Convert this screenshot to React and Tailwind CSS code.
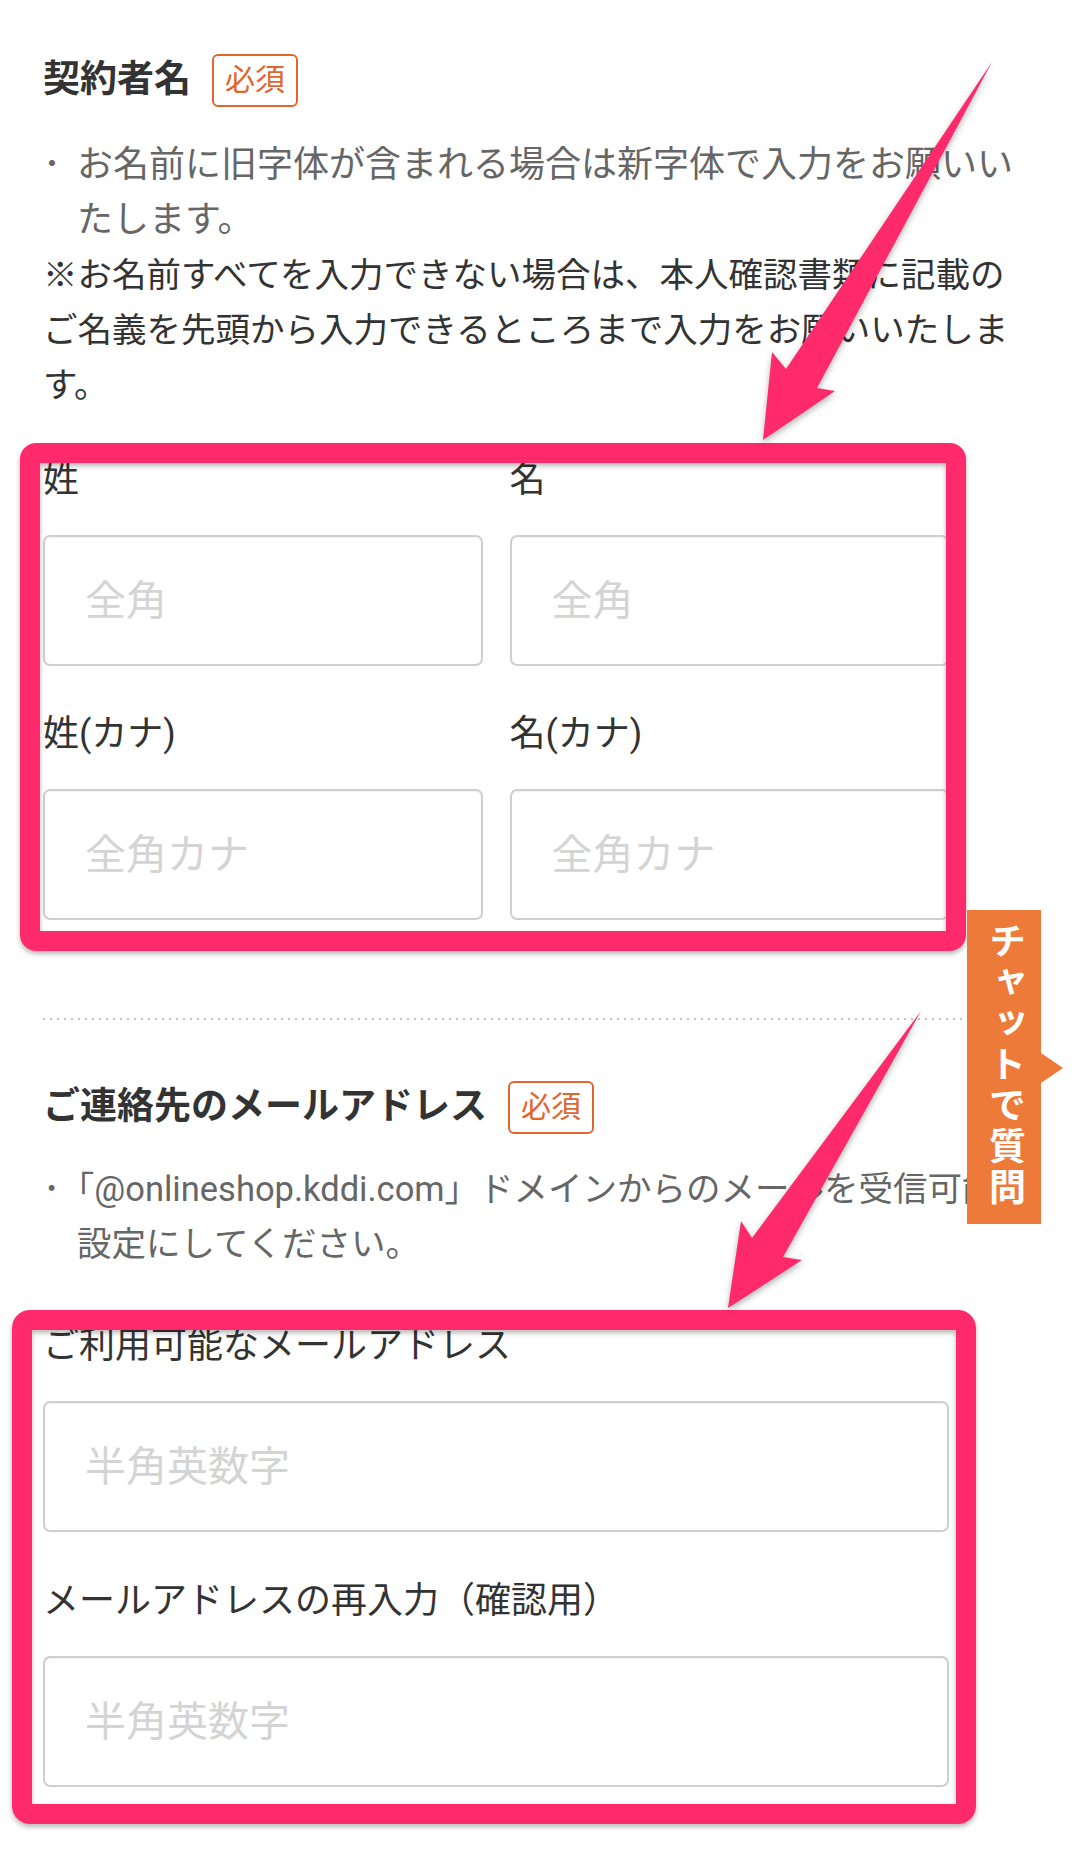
import React from 'react'

const FONT = "font-['Roboto','Noto_Sans_CJK_JP',sans-serif]"

function Heading({ title }) {
  return (
    <div className="flex items-center gap-[21px] h-[56px]">
      <h2 className="text-[37px] font-bold leading-[56px] text-[#333]">{title}</h2>
      <span className="flex items-center h-[53px] px-[11px] border-2 border-[#e2652f] rounded-[6px] text-[30px] leading-none text-[#e2652f]">
        必須
      </span>
    </div>
  )
}

function Field({ label, placeholder }) {
  return (
    <div className="flex flex-col">
      <label className="h-[56px] text-[36px] leading-[56px] text-[#333] whitespace-nowrap">{label}</label>
      <input
        type="text"
        placeholder={placeholder}
        className="mt-[27px] h-[131px] w-full px-[40px] bg-white border-2 border-[#cfcfcf] rounded-[7px] text-[41px] text-[#333] placeholder:text-[#d4d4d4] shadow-[inset_0_1px_2px_rgba(0,0,0,0.06)] outline-none"
      />
    </div>
  )
}

// pink annotation frame drawn over a block of the form
function Marked({ className, frame, children }) {
  return (
    <div className={'relative w-[906px] ' + className}>
      {children}
      <div
        className={
          'absolute border-[20px] border-[#fe2a6c] pointer-events-none shadow-[0_3px_5px_rgba(0,0,0,0.28),inset_0_3px_5px_rgba(0,0,0,0.28)] ' +
          frame
        }
      />
    </div>
  )
}

function Bullet({ children }) {
  return (
    <li className="flex">
      <span className="w-[34px] shrink-0">･</span>
      <span className="whitespace-nowrap">{children}</span>
    </li>
  )
}

export default function App() {
  return (
    <div className={'relative w-[1080px] h-[1863px] overflow-hidden bg-white ' + FONT}>
      <div className="pl-[43px] pt-[52px]">
        {/* 契約者名 */}
        <Heading title="契約者名" />
        <ul className="mt-[30px] text-[36px] leading-[55px] text-[#666]">
          <Bullet>
            お名前に旧字体が含まれる場合は新字体で入力をお願いい
            <br />
            たします。
          </Bullet>
        </ul>
        <p className="text-[34.5px] leading-[55px] text-[#333] whitespace-nowrap">
          ※お名前すべてを入力できない場合は、本人確認書類に記載の
          <br />
          ご名義を先頭から入力できるところまで入力をお願いいたしま
          <br />
          す。
        </p>

        <Marked
          className="mt-[39px]"
          frame="-left-[23px] -top-[9px] -right-[17px] -bottom-[31px] rounded-[16px]"
        >
          <div className="grid grid-cols-2 gap-x-[27px] gap-y-[40px]">
            <Field label="姓" placeholder="全角" />
            <Field label="名" placeholder="全角" />
            <Field label="姓(カナ)" placeholder="全角カナ" />
            <Field label="名(カナ)" placeholder="全角カナ" />
          </div>
        </Marked>

        <div className="mt-[98px] w-[920px] h-[2px] bg-[linear-gradient(to_right,#c4c4c4_0_2px,transparent_2px)] bg-[length:7px_2px] bg-size-[7px_2px]" />

        {/* ご連絡先のメールアドレス */}
        <div className="mt-[59px]">
          <Heading title="ご連絡先のメールアドレス" />
        </div>
        <ul className="mt-[27px] text-[34.5px] leading-[55px] text-[#666]">
          <Bullet>
            <span className="[font-feature-settings:'halt']">「</span>@onlineshop.kddi.com」ドメインからのメールを受信可能な
            <br />
            設定にしてください。
          </Bullet>
        </ul>

        <Marked
          className="mt-[46px]"
          frame="-left-[31px] -top-[8px] -right-[27px] -bottom-[37px] rounded-[18px]"
        >
          <div className="flex flex-col gap-[41px]">
            <Field label="ご利用可能なメールアドレス" placeholder="半角英数字" />
            <Field label="メールアドレスの再入力（確認用）" placeholder="半角英数字" />
          </div>
        </Marked>
      </div>

      {/* annotation arrows */}
      <svg
        className="absolute inset-0 pointer-events-none drop-shadow-[0_3px_3px_rgba(0,0,0,0.3)]"
        width="1080"
        height="1863"
        viewBox="0 0 1080 1863"
      >
        <polygon points="992,62 817,388 835,391 763,440 772,352 786,369" fill="#fe2a6c" />
        <polygon points="921,1011 783,1257 802,1260 728,1308 741,1221 752,1238" fill="#fe2a6c" />
      </svg>

      {/* chat tab */}
      <div className="absolute left-[967px] top-[910px] w-[74px] h-[314px] bg-[#ee7a39] flex justify-center pt-[12px]">
        <span className="[writing-mode:vertical-rl] text-[37px] font-bold leading-none tracking-[4px] text-white">
          チャットで質問
        </span>
        <span className="absolute left-full top-[143px] w-0 h-0 border-y-[15px] border-y-transparent border-l-[22px] border-l-[#ee7a39]" />
      </div>
    </div>
  )
}
